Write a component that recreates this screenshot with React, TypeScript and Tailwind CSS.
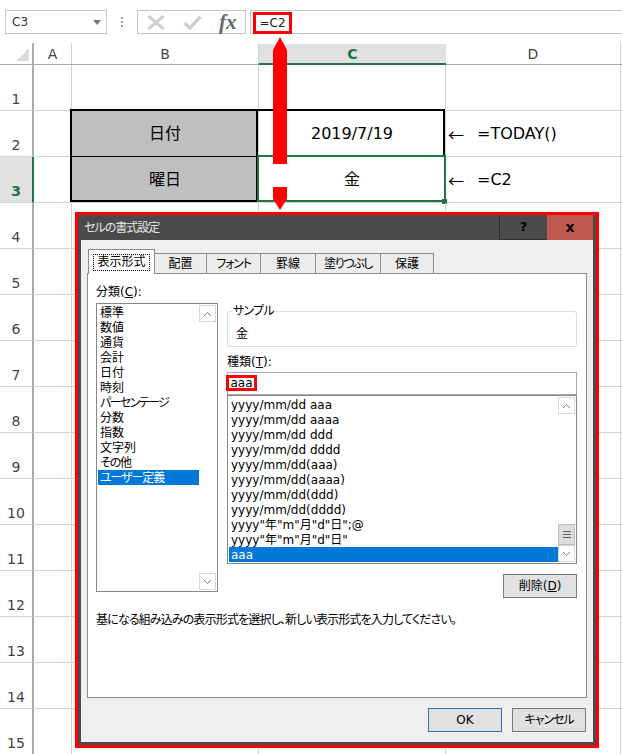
import type { ReactNode } from "react";

const FONT = "[font-family:'DejaVu_Sans','Noto_Sans_CJK_JP',sans-serif]";
const CJK = "[font-family:'Noto_Sans_CJK_JP',sans-serif]";

const CATEGORIES = [
  { label: "標準" },
  { label: "数値" },
  { label: "通貨" },
  { label: "会計" },
  { label: "日付" },
  { label: "時刻" },
  { label: "パーセンテージ", tight: "tracking-[-1.6px]" },
  { label: "分数" },
  { label: "指数" },
  { label: "文字列" },
  { label: "その他", tight: "tracking-[-1.2px]" },
  { label: "ユーザー定義", tight: "tracking-[-1.1px]" },
];
const FORMATS = [
  "yyyy/mm/dd aaa",
  "yyyy/mm/dd aaaa",
  "yyyy/mm/dd ddd",
  "yyyy/mm/dd dddd",
  "yyyy/mm/dd(aaa)",
  "yyyy/mm/dd(aaaa)",
  "yyyy/mm/dd(ddd)",
  "yyyy/mm/dd(dddd)",
  'yyyy"年"m"月"d"日";@',
  'yyyy"年"m"月"d"日"',
  "aaa",
];
const TABS = [
  { label: "配置", width: "w-[52px]", tight: "" },
  { label: "フォント", width: "w-[54px]", tight: "tracking-[-1.2px]" },
  { label: "罫線", width: "w-[55px]", tight: "" },
  { label: "塗りつぶし", width: "w-[65px]", tight: "tracking-[-1.4px]" },
  { label: "保護", width: "w-[53px]", tight: "" },
];
const COLS = "grid-cols-[34px_38px_187px_187px_175px_1px]";

function Chevron({ down }: { down?: boolean }) {
  return (
    <svg width="9" height="6" viewBox="0 0 9 6" fill="none" stroke="#808080" strokeWidth="1">
      <path d={down ? "M1 1l3.5 3.5L8 1" : "M1 5l3.5-3.5L8 5"} />
    </svg>
  );
}

function ScrollBar({ thumb }: { thumb?: boolean }) {
  return (
    <div className="flex w-[17px] shrink-0 flex-col">
      <div className="flex h-[17px] items-center justify-center border border-[#d8d8d8]">
        <Chevron />
      </div>
      <div className="flex-1" />
      {thumb ? (
        <div className="flex h-[21px] flex-col items-center justify-center gap-[2px] border border-[#bdbdbd] bg-[#dcdcdc]">
          <div className="h-px w-[8px] bg-[#606060]" />
          <div className="h-px w-[8px] bg-[#606060]" />
          <div className="h-px w-[8px] bg-[#606060]" />
        </div>
      ) : null}
      <div className="flex h-[17px] items-center justify-center border border-[#d8d8d8]">
        <Chevron down />
      </div>
    </div>
  );
}

function DialogButton({ children, primary }: { children: ReactNode; primary?: boolean }) {
  return (
    <div
      className={`flex h-[24px] w-[74px] items-center justify-center border bg-[#e1e1e1] text-[12px] ${
        primary ? "border-[#2b78b4]" : "border-[#7a7a7a]"
      }`}
    >
      {children}
    </div>
  );
}

function FormatDialog() {
  return (
    <div className="absolute left-[75px] top-[212px] h-[536px] w-[524px] border-[3px] border-[#ff0000] bg-[#4a4a4a] text-[12px] text-black [font-feature-settings:'palt']">
      <div className="flex h-[25px] items-center justify-between pl-[6px] pr-[3px]">
        <span className="text-[12px] tracking-[-1px] text-[#e6e6e6]">セルの書式設定</span>
        <div className="flex h-full">
          <div className="flex w-[48px] items-center justify-center border-b border-l border-[#2f2f2f] text-[13px] font-bold">?</div>
          <div className="flex w-[46px] items-center justify-center bg-[#c0584f] text-[14px] font-bold">x</div>
        </div>
      </div>
      <div className="mx-[3px] h-[502px] bg-[#efefef] px-[6px] pt-[9px]">
        <div className="flex h-[25px] items-end pl-px">
          <div className="relative z-10 flex h-[25px] w-[67px] items-center justify-center border border-b-0 border-[#898c95] bg-white">
            <span className="border border-dotted border-black px-[3px] leading-[15px]">表示形式</span>
          </div>
          {TABS.map((tab) => (
            <div
              key={tab.label}
              className={`flex h-[21px] items-center justify-center border border-l-0 border-[#898c95] bg-[#ececec] ${tab.width} ${tab.tight}`}
            >
              {tab.label}
            </div>
          ))}
        </div>
        <div className="-mt-px h-[425px] border border-[#898c95] bg-white pl-[8px] pr-[9px] pt-[10px]">
          <div className="flex gap-[9px]">
            <div className="w-[122px]">
              <div className="h-[19px] leading-[16px]">
                分類(<span className="underline">C</span>):
              </div>
              <div className="flex h-[289px] border border-[#828790] p-px">
                <div className="flex-1">
                  {CATEGORIES.map((item, index) => (
                    <div
                      key={item.label}
                      className={`h-[15px] pl-[2px] leading-[16px] ${item.tight ?? ""} ${index === 11 ? "bg-[#0078d7] text-white" : ""}`}
                    >
                      {item.label}
                    </div>
                  ))}
                </div>
                <ScrollBar />
              </div>
            </div>
            <div className="flex w-[350px] flex-col">
              <div className="relative mt-[27px] flex h-[36px] items-center rounded-[3px] border border-[#d5dfe5] pl-[8px]">
                <span className="absolute -top-[9px] left-[4px] bg-white px-px leading-[16px] tracking-[-0.8px]">サンプル</span>
                <span className="pt-[9px]">金</span>
              </div>
              <div className="mt-[7px] h-[18px] leading-[16px]">
                種類(<span className="underline">T</span>):
              </div>
              <div className="h-[23px] border border-[#a9a9a9] pt-[2px]">
                <div className="-ml-[2px] flex h-[16px] w-[31px] items-center justify-center border-[3px] border-[#ff0000] leading-none">aaa</div>
              </div>
              <div className="flex h-[169px] border border-[#828790] p-px">
                <div className="flex-1">
                  {FORMATS.map((item, index) => (
                    <div
                      key={item}
                      className={`h-[15px] pl-[2px] leading-[16px] ${index === 10 ? "bg-[#0078d7] text-white" : ""}`}
                    >
                      {item}
                    </div>
                  ))}
                </div>
                <ScrollBar thumb />
              </div>
              <div className="mt-[10px] flex justify-end">
                <DialogButton>
                  <span>
                    削除(<span className="underline">D</span>)
                  </span>
                </DialogButton>
              </div>
            </div>
          </div>
          <p className="mt-[14px] h-[16px] whitespace-nowrap leading-[16px] tracking-[-0.85px]">
            基になる組み込みの表示形式を選択し、新しい表示形式を入力してください。
          </p>
        </div>
        <div className="mt-[10px] flex justify-end gap-[10px] pr-px">
          <DialogButton primary>OK</DialogButton>
          <DialogButton>
            <span className="tracking-[-1px]">キャンセル</span>
          </DialogButton>
        </div>
      </div>
    </div>
  );
}

function RefArrow() {
  return (
    <svg className="absolute left-[273px] top-[37px] z-20" width="14" height="173" viewBox="0 0 14 173" fill="#ff0000">
      <path d="M7 0L14 13V127H0V13Z" />
      <path d="M0 150H14V162L7 173L0 162Z" />
    </svg>
  );
}

function FormulaBar() {
  return (
    <div className="flex h-[43px] items-start pt-[10px]">
      <div className="ml-[5px] flex h-[24px] w-[102px] items-center justify-between border border-[#c6c6c6] pl-[6px] pr-[5px] text-[12px] text-[#333]">
        C3
        <div className="h-0 w-0 border-x-[4px] border-t-[5px] border-x-transparent border-t-[#777]" />
      </div>
      <div className="flex h-[24px] w-[30px] flex-col items-center justify-center gap-[2px]">
        <div className="h-[2px] w-[2px] bg-[#a0a0a0]" />
        <div className="h-[2px] w-[2px] bg-[#a0a0a0]" />
        <div className="h-[2px] w-[2px] bg-[#a0a0a0]" />
      </div>
      <div className="flex h-[24px] w-[109px] items-center border border-[#c6c6c6] pl-[9px]">
        <svg width="18" height="15" viewBox="0 0 18 15" fill="none" stroke="#cfcfcf" strokeWidth="3">
          <path d="M1.5 1L16.5 14M16.5 1L1.5 14" />
        </svg>
        <svg className="ml-[18px]" width="19" height="15" viewBox="0 0 19 15" fill="none" stroke="#cfcfcf" strokeWidth="3.4">
          <path d="M1.5 8L7 13L17.5 1.5" />
        </svg>
        <span className="ml-[17px] font-['Liberation_Serif',serif] text-[21px] font-bold italic leading-none text-[#666]">fx</span>
      </div>
      <div className="ml-[4px] flex h-[24px] flex-1 items-start border-y border-l border-[#c6c6c6] pl-[2px] pt-px">
        <div className="flex h-[22px] w-[39px] items-center justify-center border-[3px] border-[#ff0000] text-[12px] text-[#222]">=C2</div>
      </div>
    </div>
  );
}

function ColumnHeader() {
  return (
    <div className={`grid h-[22px] ${COLS} border-b border-[#ababab] text-[14px] leading-none text-[#444]`}>
      <div className="flex items-end justify-end border-r-2 border-[#ababab] pb-[3px] pr-[3px]">
        <div className="h-0 w-0 border-b-[13px] border-l-[13px] border-b-[#dcdcdc] border-l-transparent" />
      </div>
      <div className="flex items-center justify-center border-r border-[#d4d4d4] pt-px">A</div>
      <div className="flex items-center justify-center border-r border-[#d4d4d4] pt-px">B</div>
      <div className="-mb-px mt-px flex items-center justify-center border-b-2 border-[#217346] bg-[#e1e1e1] font-bold text-[#217346]">C</div>
      <div className="flex items-center justify-center border-r border-[#d4d4d4] pt-px">D</div>
    </div>
  );
}

function SheetRows() {
  const rows = Array.from({ length: 15 }, (_, index) => index + 1);
  return (
    <div className={`grid auto-rows-[46px] ${COLS} text-[16px] text-black`}>
      {rows.map((row) => (
        <div key={row} className="contents">
          <div
            className={`flex items-end justify-center border-b border-r-2 text-[14px] ${
              row === 3
                ? "border-b-[#d4d4d4] border-r-[#217346] bg-[#e1e1e1] font-bold text-[#217346]"
                : "border-b-[#d4d4d4] border-r-[#ababab] text-[#444]"
            }`}
          >
            {row}
          </div>
          <div className="border-b border-r border-[#d4d4d4]" />
          <div className={`relative flex items-center justify-center border-b border-r border-[#d4d4d4] pt-px ${row === 2 || row === 3 ? "bg-[#bfbfbf]" : ""}`}>
            {row === 2 ? "日付" : row === 3 ? "曜日" : null}
            {row === 2 ? <div className="absolute -left-[2px] -top-[2px] bottom-0 right-0 border-2 border-b-0 border-black" /> : null}
            {row === 3 ? <div className="absolute -left-[2px] -top-px bottom-0 right-0 border-2 border-black [border-top-width:1px]" /> : null}
          </div>
          <div className="relative flex items-center justify-center border-b border-r border-[#d4d4d4] pt-px">
            {row === 2 ? "2019/7/19" : row === 3 ? "金" : null}
            {row === 2 ? <div className="absolute -left-px -top-[2px] bottom-0 right-0 border-2 border-b-0 border-l-0 border-black" /> : null}
            {row === 3 ? (
              <div className="absolute -left-[2px] -right-px -top-[2px] bottom-0 border-2 border-[#217346]">
                <div className="absolute -bottom-[4px] -right-[3px] h-[5px] w-[5px] bg-[#217346]" />
              </div>
            ) : null}
          </div>
          <div className="flex items-center border-b border-r border-[#d4d4d4] pl-[2px] pt-px">
            {row === 2 || row === 3 ? (
              <>
                <span className={`${CJK} w-[29px]`}>←</span>
                {row === 2 ? "=TODAY()" : "=C2"}
              </>
            ) : null}
          </div>
          <div className="border-b border-[#d4d4d4]" />
        </div>
      ))}
    </div>
  );
}

export default function App() {
  return (
    <div className={`relative h-[754px] w-[622px] overflow-hidden bg-white ${FONT}`}>
      <FormulaBar />
      <ColumnHeader />
      <SheetRows />
      <FormatDialog />
      <RefArrow />
    </div>
  );
}
